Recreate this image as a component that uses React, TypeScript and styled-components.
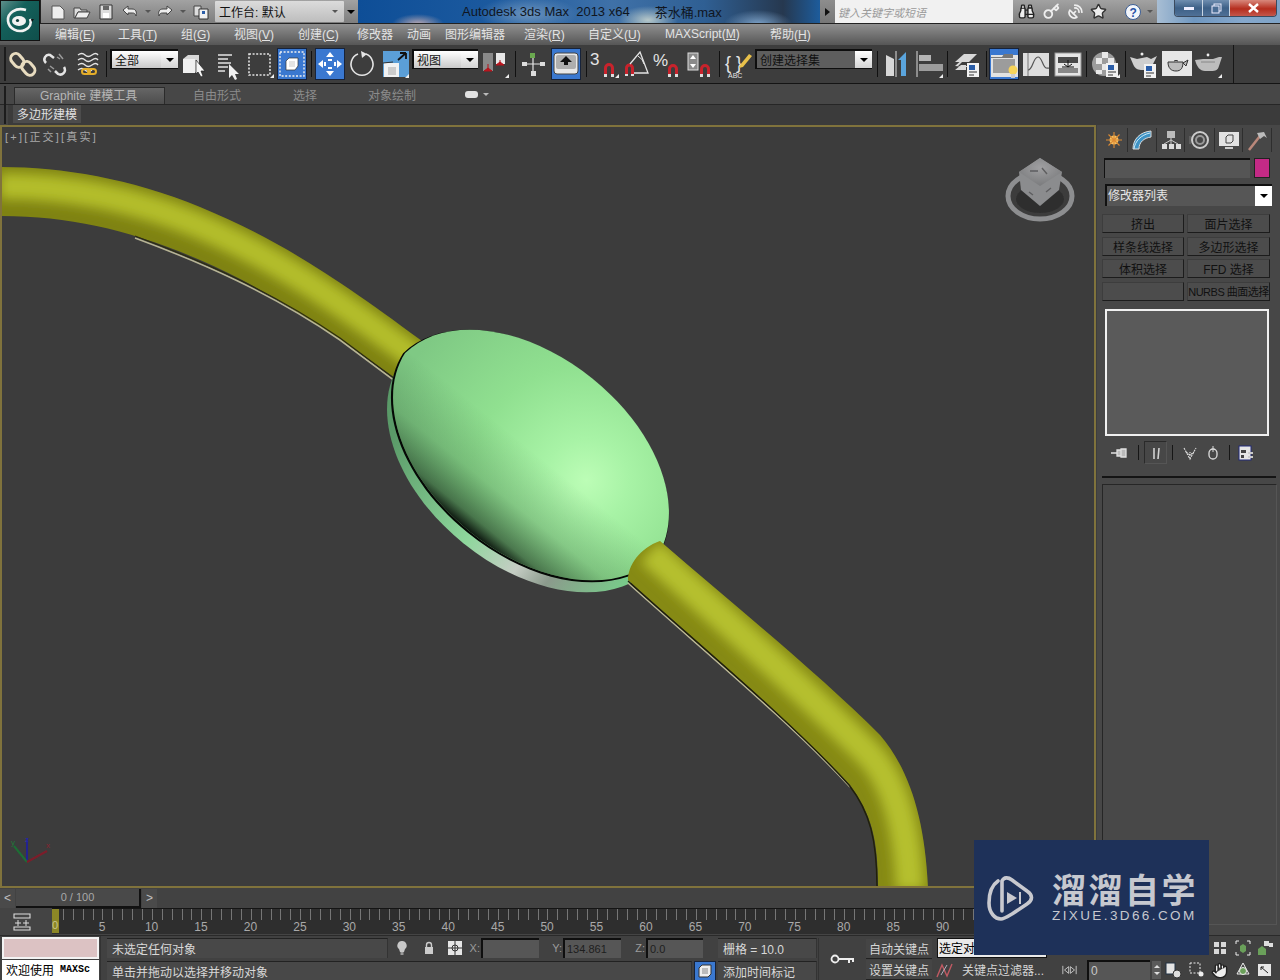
import React from 'react';
import styled, { createGlobalStyle } from 'styled-components';
import { Binoculars, Key, SatelliteDish, Star, Hand } from 'lucide-react';

const FONT = '"Liberation Sans", "Noto Sans CJK SC", sans-serif';

const Global = createGlobalStyle`
  html, body { margin: 0; padding: 0; background: #3f3f3f; overflow: hidden; }
  * { box-sizing: border-box; }
  #root { width: 1280px; height: 980px; }
`;

const Page = styled.div`
  position: relative; width: 1280px; height: 980px; overflow: hidden;
  font-family: ${FONT}; font-size: 12px; background: #444; color: #ddd;
`;

/* ---------- title ---------- */
const TitleBar = styled.div`display: flex; height: 24px; background: #222;`;
const LogoSpace = styled.div`width: 41px; flex: none;`;
const LogoBox = styled.div`
  position: absolute; left: 0; top: 0; width: 40px; height: 41px;
  background: linear-gradient(135deg, #5f8f8b 0%, #14605b 35%, #0f4f4b 100%);
  border: 1px solid #111; display: flex; align-items: center; justify-content: center;
`;
const Qat = styled.div`
  width: 317px; height: 23px; flex: none; display: flex; align-items: center; padding-left: 5px;
  background: linear-gradient(#a2a2a2, #7e7e7e);
`;
const QatCell = styled.div<{ $w: number }>`
  width: ${p => p.$w}px; flex: none; display: flex; align-items: center; justify-content: center; color: #eee;
`;
const Workspace = styled.div`
  width: 129px; height: 21px; flex: none; margin-left: 2px; display: flex; align-items: center; justify-content: space-between;
  padding: 0 6px 0 4px; color: #111; font-size: 12px; background: linear-gradient(#dcdcdc, #bdbdbd); border-radius: 1px;
`;
const TinyCaret = styled.span<{ $c?: string; $up?: boolean }>`
  display: inline-block; width: 0; height: 0; border-left: 3px solid transparent; border-right: 3px solid transparent;
  ${p => p.$up ? `border-bottom: 3px solid ${p.$c || '#555'};` : `border-top: 3px solid ${p.$c || '#555'};`}
`;
const AeroTitle = styled.div`
  width: 462px; height: 23px; flex: none; display: flex; align-items: center; padding-left: 104px;
  color: #10161f; font-size: 13px; white-space: pre;
  background:
    radial-gradient(ellipse 30px 14px at 290px 20px, #b7c8c9, transparent),
    radial-gradient(ellipse 26px 10px at 60px 24px, #b9a7b0, transparent),
    radial-gradient(ellipse 34px 14px at 400px 24px, #7ba0c6, transparent),
    radial-gradient(ellipse 50px 18px at 170px 14px, #6b93bd, transparent),
    linear-gradient(90deg, #0e4e97, #1c5a9f 30%, #3f71a8 55%, #2f5f93 75%, #26384f 92%, #1d5c9c);
`;
const FileName = styled.span`margin-left: 25px;`;
const SearchZone = styled.div`
  width: 337px; height: 23px; flex: none; display: flex; align-items: center;
  background: linear-gradient(#a2a2a2, #7e7e7e);
`;
const SearchArrow = styled.div`
  width: 15px; height: 23px; flex: none; display: flex; align-items: center; justify-content: center;
  background: linear-gradient(#8d8d8d, #777);
`;
const SearchArrowHead = styled.span`
  display: block; width: 0; height: 0; border-top: 4px solid transparent; border-bottom: 4px solid transparent; border-left: 5px solid #111;
`;
const SearchInput = styled.div`
  width: 178px; height: 23px; flex: none; background: #f1f1f1; color: #9a9a9a; font-size: 11px; font-style: italic;
  display: flex; align-items: center; padding-left: 3px;
`;
const Glass = styled.div`
  flex: 1; height: 23px; position: relative;
  background: linear-gradient(90deg, #a8bed4, #6f97c0 30%, #86a8cc 70%, #7ea3c7);
`;
const WinButtons = styled.div`
  position: absolute; left: 17px; top: 0; width: 103px; height: 17px; display: flex; border: 1px solid #3b4a5e; border-top: none;
  border-radius: 0 0 4px 4px; overflow: hidden;
`;
const WinButton = styled.div<{ $w: number; $close?: boolean }>`
  width: ${p => p.$w}px; flex: none; display: flex; align-items: center; justify-content: center;
  background: ${p => p.$close ? 'linear-gradient(#d8887c, #b52d1e 55%, #c4574b)' : 'linear-gradient(#6f8eb0, #3d6087 50%, #4f7096)'};
  border-right: 1px solid #c9d6e4;
`;

/* ---------- menu ---------- */
const MenuBar = styled.div`
  height: 21px; display: flex; align-items: center; padding: 0 0 2px 55px;
  background: linear-gradient(#909090, #565656); color: #e3e3e3; font-size: 12px;
`;
const MenuItem = styled.span<{ $w: number }>`width: ${p => p.$w}px; flex: none; white-space: nowrap;`;

/* ---------- toolbar ---------- */
const MainToolbar = styled.div`
  height: 39px; display: flex; align-items: center; background: #3d3d3d; border-bottom: 1px solid #141414; position: relative;
`;
const Grip = styled.div`
  width: 7px; flex: none; align-self: stretch; margin: 2px 0; position: relative;
  &::before { content: ''; position: absolute; left: 4px; top: 0; bottom: 0; width: 2px; background: #1c1c1c; }
`;
const Tool = styled.div<{ $w: number; $fly?: boolean }>`
  position: relative; width: ${p => p.$w}px; flex: none; height: 32px; display: flex; align-items: center; justify-content: center;
  ${p => p.$fly ? `&::after { content: ''; position: absolute; right: 2px; bottom: 2px; width: 0; height: 0; border-left: 4px solid transparent; border-bottom: 4px solid #eee; }` : ''}
`;
const ActiveInset = styled.div<{ $w: number }>`
  width: ${p => p.$w}px; height: 32px; flex: none; background: #3a78d0; border: 1px solid #17233a; display: flex; align-items: center; justify-content: center;
  &[data-small='1'] { height: 20px; }
`;
const Sep = styled.div<{ $w: number }>`
  width: ${p => p.$w}px; flex: none; height: 26px; display: flex; justify-content: center;
  &::before { content: ''; width: 1px; background: #111; }
`;
const SelectBox = styled.div<{ $w: number; $dark?: boolean }>`
  width: ${p => p.$w}px; margin: -10px 1px 0; height: 20px; flex: none; position: relative;
  display: flex; align-items: center; padding-left: 3px; color: #111; font-size: 12px;
  background: ${p => p.$dark ? '#5e5e5e' : 'linear-gradient(#fff, #c9c9c9)'}; border: 2px solid #0e0e0e; border-right: none; border-bottom: 1px solid #0e0e0e;
`;
const SelectArrow = styled.span`
  position: absolute; right: 0; top: 0; bottom: 0; width: 17px; background: linear-gradient(#fff, #d4d4d4); display: flex; align-items: center; justify-content: center;
`;
const Caret = styled.span`
  display: block; width: 0; height: 0; border-left: 4px solid transparent; border-right: 4px solid transparent; border-top: 4px solid #000;
`;
const ToolbarEnd = styled.div`width: 1px; align-self: stretch; margin-left: 9px; background: #161616;`;
const ToolSvg = styled.svg.attrs({ viewBox: '0 0 32 32', width: 32, height: 32, fill: 'none' })`display: block; flex: none;`;

/* ---------- ribbon ---------- */
const RibbonWrap = styled.div`position: relative; padding-left: 8px;
  &::before { content: ''; position: absolute; left: 4px; top: 2px; bottom: 1px; width: 2px; background: #1c1c1c; z-index: 1; }
`;
const RibbonTabs = styled.div`
  height: 21px; display: flex; align-items: flex-start; padding-top: 3px; background: #474747; border-bottom: 1px solid #262626; margin-left: -8px; padding-left: 14px; color: #8c8c8c;
`;
const RibbonActive = styled.div`
  width: 151px; height: 17px; flex: none; display: flex; align-items: center; padding: 0 0 3px 25px; color: #b5b5b5;
  background: linear-gradient(#666, #4d4d4d); border: 1px solid #2b2b2b; border-bottom: none;
`;
const RibbonTab = styled.div<{ $w: number; $pad: number }>`
  width: ${p => p.$w}px; flex: none; height: 17px; display: flex; align-items: center; padding: 0 0 3px ${p => p.$pad}px;
`;
const RibbonPill = styled.span`
  display: inline-block; width: 13px; height: 7px; border-radius: 3px; background: #e2e2e2; margin: 4px 5px 0 28px;
`;
const RibbonCaret = styled(TinyCaret)`margin-top: 6px;`;
const RibbonRow = styled.div`height: 20px; background: #3b3b3b; padding-left: 5px; display: flex; align-items: flex-start;`;
const RibbonChip = styled.div`
  width: 68px; height: 18px; background: #4c4c4c; color: #e0e0e0; display: flex; align-items: center; justify-content: center; padding-bottom: 1px; font-size: 12px; white-space: nowrap;
`;

/* ---------- middle ---------- */
const Middle = styled.div`display: flex; height: 810px;`;
const LeftColumn = styled.div`width: 1096px; flex: none; display: flex; flex-direction: column;`;
const Viewport = styled.div`
  position: relative; height: 763px; flex: none; border: 2px solid #80733c; background: #3c3c3c; overflow: hidden;
`;
const ViewLabel = styled.div`
  position: absolute; left: 3px; top: 1px; color: #a8a8a8; font-size: 11px; letter-spacing: 2.2px; white-space: pre;
`;
const Scene = styled.svg.attrs({ fill: 'none' })`display: block;`;

const SliderRow = styled.div`height: 20px; display: flex; align-items: center; background: #424242; flex: none;`;
const SliderBtn = styled.div`width: 15px; height: 19px; flex: none; display: flex; align-items: center; justify-content: center; color: #c0c0c0; font-size: 12px; background: #4a4a4a;`;
const SliderThumb = styled.div`
  width: 125px; height: 19px; margin: 0 1px; flex: none; display: flex; align-items: center; justify-content: center; color: #a8a8a8; font-size: 11px;
  background: #494949; border-bottom: 2px solid #111; border-right: 2px solid #111;
`;
const TrackRow = styled.div`height: 27px; display: flex; background: #444; flex: none;`;
const TrackIcon = styled.div`width: 52px; flex: none; display: flex; align-items: center; justify-content: center; padding-right: 8px;`;
const Ruler = styled.div`
  flex: 1; height: 26px; position: relative; background: #2e2e2e; border-top: 1px solid #151515; overflow: hidden;
`;
const Ticks = styled.div`
  height: 11px; background: repeating-linear-gradient(90deg, #888 0 1px, transparent 1px 9.89px); background-position: 1px 0; opacity: .8;
`;
const Labels = styled.div`display: flex; margin-left: -24px; color: #a9a9a9; font-size: 12px; line-height: 14px;`;
const RulerLabel = styled.span`width: 49.45px; flex: none; text-align: center;`;
const TimeHandle = styled.div`
  position: absolute; left: -1px; top: 0; width: 8px; height: 24px; background: #8c8726; color: #c8c48c; font-size: 11px;
  display: flex; align-items: flex-end; justify-content: center; padding-bottom: 2px;
`;

const CommandPanel = styled.div`
  width: 184px; flex: none; background: #474747; border-left: 1px solid #3d3d3d; padding: 3px 0 0 7px; display: flex; flex-direction: column;
`;
const PanelTabs = styled.div`display: flex; height: 24px; margin-left: -4px;`;
const PanelTab = styled.div<{ $w: number }>`
  width: ${p => p.$w}px; flex: none; display: flex; align-items: center; justify-content: center; border-right: 1px solid #2e2e2e;
`;
const NameRow = styled.div`display: flex; margin-top: 6px; height: 20px; gap: 4px;`;
const NameInput = styled.div`width: 146px; background: #555; border-top: 2px solid #111; border-left: 1px solid #111;`;
const Swatch = styled.div`width: 16px; background: #c42a86; border: 1px solid #222;`;
const ModifierList = styled.div`
  position: relative; width: 167px; height: 22px; margin: 6px 0 0 1px; background: #565656; border-top: 2px solid #111; border-left: 2px solid #111;
  color: #e6e6e6; display: flex; align-items: center; padding: 0 0 3px 1px; font-size: 12px;
`;
const ModArrow = styled.span`
  position: absolute; right: 0; top: 0; bottom: 0; width: 17px; background: #fff; display: flex; align-items: center; justify-content: center;
`;
const ModGrid = styled.div`
  display: grid; grid-template-columns: 82px 83px; column-gap: 3px; grid-auto-rows: 19px; row-gap: 3.6px; margin: 8px 0 0 -2px; width: 168px;
`;
const ModButton = styled.div<{ $narrow?: boolean }>`
  background: #4c4c4c; border: 1px solid #3d3d3d; border-right-color: #1c1c1c; border-bottom-color: #1c1c1c; color: #111;
  display: flex; align-items: center; justify-content: center; font-size: 12px; white-space: nowrap; overflow: hidden;
  ${p => p.$narrow ? 'letter-spacing: -.5px; font-size: 11px;' : ''}
`;
const Preview = styled.div`
  width: 164px; height: 127px; margin: 8px 0 0 1px; background: #5a5a5a; border: 2px solid #f0f0f0; flex: none;
`;
const StackIcons = styled.div`display: flex; align-items: center; height: 24px; margin-top: 5px;`;
const StackCell = styled.div<{ $w: number; $box?: boolean }>`
  width: ${p => p.$w}px; height: 23px; flex: none; display: flex; align-items: center; justify-content: center;
  ${p => p.$box ? 'border: 1px solid #2a2a2a; border-right-color:#555;border-bottom-color:#555;' : ''}
`;
const StackSep = styled.div`width: 1px; height: 15px; background: #161616; flex: none; margin: 0 5px;`;
const RollupLine = styled.div`height: 2px; background: #141414; width: 174px; margin: 11px 0 0 -2px; flex: none;`;
const RollupBox = styled.div`
  width: 175px; height: 441px; margin: 6px 0 0 -2px; flex: none; background: #484848; border: 1px solid #262626; border-right-color:#555; border-bottom-color:#555;
`;

/* ---------- status ---------- */
const StatusBar = styled.div`display: flex; height: 45px; background: #414141; border-top: 1px solid #2a2a2a;`;
const Listener = styled.div`width: 100px; flex: none; padding: 1px 0 0 2px; display: flex; flex-direction: column; gap: 1px;`;
const ListenerPink = styled.div`width: 97px; height: 22px; background: #dcc2c3; border: 2px solid #f3f3f3; flex: none;`;
const ListenerWhite = styled.div`
  width: 97px; height: 20px; background: #fff; color: #000; font-size: 12px; display: flex; align-items: center; padding: 0 0 1px 4px; white-space: nowrap; overflow: hidden; flex: none;
`;
const ListenerMono = styled.span`font-family: "Liberation Mono", monospace; font-size: 10px; font-weight: bold; margin-left: 6px;`;
const StatusMid = styled.div`
  width: 718px; flex: none; padding: 2px 0 0 6px; border-left: 1px solid #333; display: flex; flex-direction: column; gap: 3px;
`;
const StatusRow = styled.div`display: flex; align-items: center; height: 20px; flex: none;`;
const StatusText = styled.div<{ $w: number }>`
  width: ${p => p.$w}px; height: 20px; flex: none; background: #484848; border-top: 1px solid #222; border-right: 1px solid #333;
  color: #d8d8d8; display: flex; align-items: center; padding-left: 5px; font-size: 12px; white-space: nowrap;
`;
const StatusCell = styled.div<{ $w: number }>`width: ${p => p.$w}px; flex: none; display: flex; align-items: center; justify-content: center;`;
const AxisLabel = styled.span<{ $w: number }>`width: ${p => p.$w}px; flex: none; text-align: right; color: #9c9c9c; font-size: 11px; padding-right: 1px;`;
const CoordInput = styled.div<{ $w: number }>`
  width: ${p => p.$w}px; height: 20px; flex: none; background: #565656; border-top: 2px solid #0f0f0f; border-left: 2px solid #0f0f0f; color: #1e1e1e; font-size: 11px;
  display: flex; align-items: center; padding-left: 2px;
`;
const KeyIconCell = styled.div`width: 48px; flex: none; display: flex; align-items: center; justify-content: center; border-left: 1px solid #333; margin-top: 2px;`;
const KeyColumn = styled.div`width: 67px; flex: none; padding-top: 3px; display: flex; flex-direction: column; gap: 1px;`;
const KeyButton = styled.div`
  width: 66px; height: 21px; display: flex; align-items: center; justify-content: center; color: #d5d5d5; font-size: 12px; background: #454545; border-bottom: 1px solid #222; white-space: nowrap;
`;
const KeyOptions = styled.div`width: 115px; flex: none; padding: 2px 0 0 4px; display: flex; flex-direction: column; gap: 2px;`;
const SelectSet = styled.div`
  width: 110px; height: 20px; background: #e9e9e9; color: #000; border: 1px solid #111; font-size: 12px; padding-left: 1px; display: flex; align-items: center; white-space: nowrap; overflow: hidden;
`;
const FilterRow = styled.div`
  display: flex; align-items: center; height: 21px; color: #d5d5d5; font-size: 12px; white-space: nowrap; gap: 7px; margin-left: -2px;
`;
const PlayBlock = styled.div`width: 15px; flex: none; margin-left: 14px; margin-top: 26px; height: 16px; display: flex; align-items: center; justify-content: center;`;
const FrameInput = styled.div`
  width: 63px; height: 20px; flex: none; margin: 24px 0 0 10px; background: #565656; border-top: 2px solid #0f0f0f; border-left: 2px solid #0f0f0f; color: #c8c8c8; font-size: 12px; display: flex; align-items: center; padding-left: 2px;
`;
const FrameSpin = styled.div`width: 9px; height: 18px; flex: none; margin: 25px 0 0 2px; background: #5a5a5a; display: flex; flex-direction: column; align-items: center; justify-content: space-evenly;`;
const NavGrid = styled.div`
  width: 113px; flex: none; margin-left: 2px; padding-top: 1px; display: grid; grid-template-columns: 21px 24px 23px 23px 22px; grid-auto-rows: 22px;
`;
const NavCell = styled.div`display: flex; align-items: center; justify-content: center; color: #e6e6e6;`;

/* ---------- watermark ---------- */
const Watermark = styled.div`
  position: absolute; left: 974px; top: 840px; width: 235px; height: 115px; background: #1e3159; display: flex; align-items: center; padding-left: 13px; gap: 17px;
`;
const MarkText = styled.div`display: flex; flex-direction: column; color: #c6c8cf;`;
const MarkTitle = styled.div`font-family: "Noto Sans CJK SC", sans-serif; font-weight: 700; font-size: 34px; line-height: 36px; letter-spacing: 2.5px; white-space: nowrap;`;
const MarkUrl = styled.div`font-family: "Liberation Sans", sans-serif; font-size: 13.5px; line-height: 18px; letter-spacing: 2.4px; white-space: nowrap;`;

/* ---------- icons ---------- */
const W = '#e4e4e4';
const icons: Record<string, React.ReactNode> = {
  link: <g stroke="#e8dcc0" strokeWidth="3"><rect x="5" y="5" width="10" height="15" rx="5" transform="rotate(-40 10 12)" /><rect x="16" y="13" width="10" height="15" rx="5" transform="rotate(-40 21 20)" /></g>,
  unlink: <g stroke={W} strokeWidth="2.5"><path d="M7 15c-4-4 0-9 4-8l4 3" /><path d="M25 19c3 5-2 9-6 7l-3-3" /><path d="M18 9l3 2m-1-5l4 5M9 21l3 3m-1-6l4 3" stroke="#9a9a9a" strokeWidth="1.5" /></g>,
  bind: <g><path d="M6 7q4-3 7 0t7 0t6 0M6 12q4-3 7 0t7 0t6 0M6 17q4-3 7 0t7 0t6 0M6 22q4-3 7 0t7 0" stroke={W} strokeWidth="1.4" /><rect x="10" y="21" width="8" height="5" rx="2.5" stroke="#e5ae2a" strokeWidth="2" /><rect x="16" y="21" width="8" height="5" rx="2.5" stroke="#e5ae2a" strokeWidth="2" /></g>,
  select: <g><path d="M4 11l5-4h11v13l-4 5H4z" fill="#d8d8d8" /><path d="M4 11h12v14H4z" fill="#f0f0f0" /><path d="M17 12l9 11h-4l2 5-2 1-3-5-2 2z" fill="#f5f5f5" stroke="#222" strokeWidth=".7" /></g>,
  selname: <g><path d="M6 7h14M6 11h10M6 15h13M6 19h10M6 23h7" stroke={W} strokeWidth="1.3" /><path d="M17 16l10 10h-4l2 5-2 1-3-5-3 3z" fill="#f0f0f0" /></g>,
  rect: <rect x="5" y="6" width="21" height="21" stroke={W} strokeWidth="1.6" strokeDasharray="2 1.6" />,
  window: <g><rect x="4" y="4" width="24" height="24" stroke="#f0f0f0" strokeWidth="1.4" strokeDasharray="2 1.6" /><path d="M10 13l3-3h9v8l-3 4h-9z" fill="#fff" stroke="#333" strokeWidth=".7" /><path d="M13 13h6v6h-6z" fill="#e4e4e4" /></g>,
  move: <g fill="#fff"><path d="M16 4l4 5h-8zM16 28l4-5h-8zM4 16l5-4v8zM28 16l-5-4v8z" /><rect x="14" y="11" width="4" height="2" /><rect x="14" y="19" width="4" height="2" /><rect x="10" y="14" width="2" height="4" /><rect x="20" y="14" width="2" height="4" /></g>,
  rotate: <g><path d="M20 6a11 11 0 1 1-8 0" stroke={W} strokeWidth="1.6" /><path d="M15 3l6 3-5 4z" fill={W} /></g>,
  scale: <g><path d="M4 3h26v26H4z" fill="#5b9fd8" /><path d="M5 15h15v14H5z" fill="#f2f2f2" /><path d="M9 19h8v8H9z" fill="#ccc" /><path d="M4 15l10-1" stroke="#333" /><path d="M19 12l8-7m0 0h-6m6 0v6" stroke="#111" strokeWidth="1.8" /></g>,
  refs: <g><path d="M4 5h10v18H4z" fill="#8a8a8a" /><path d="M17 5h9v11h-9z" fill="#e8e8e8" /><path d="M9 16v7m-4 0l4-3 4 3zM21 12v5m-4 0l4-3 4 3z" stroke="#b3131b" fill="#c41a22" /></g>,
  pivot: <g><path d="M16 5v22M5 16h22" stroke={W} strokeWidth="1.2" /><rect x="13" y="5" width="5" height="5" fill="#6aa84f" /><rect x="5" y="14" width="5" height="4" fill="#ddd" /><rect x="23" y="14" width="5" height="4" fill="#ddd" /><rect x="14" y="23" width="5" height="5" fill="#ddd" /></g>,
  manip: <g><rect x="4" y="5" width="24" height="21" rx="3" fill="#e8e8e8" stroke="#444" /><rect x="6" y="7" width="20" height="14" rx="2" fill="#aeaeae" /><path d="M16 8l6 6h-4v3h-4v-3h-4z" fill="#111" /></g>,
  snap3: <g><text x="2" y="17" fontSize="17" fill={W} fontFamily="Liberation Sans">3</text><path d="M16 29v-9a5 5 0 0 1 10 0v9h-3v-9a2 2 0 0 0-4 0v9z" fill="#c8232c" /><path d="M16 26h3v3h-3zM23 26h3v3h-3z" fill="#ddd" /></g>,
  snapA: <g><path d="M4 28v-8a4 4 0 0 1 9 0v8h-3v-8a1 1 0 0 0-3 0v8z" fill="#c8232c" /><path d="M4 26h3v2H4zM10 26h3v2h-3z" fill="#ddd" /><path d="M9 16L19 4l8 21h-14" stroke={W} strokeWidth="1.3" /><path d="M17 8q5 3 6 8" stroke={W} /></g>,
  snapP: <g><text x="1" y="18" fontSize="17" fill={W} fontFamily="Liberation Sans">%</text><path d="M16 29v-8a5 5 0 0 1 10 0v8h-3v-8a2 2 0 0 0-4 0v8z" fill="#c8232c" /><path d="M16 26h3v3h-3zM23 26h3v3h-3z" fill="#ddd" /></g>,
  snapS: <g><rect x="4" y="5" width="10" height="17" fill="#8a8a8a" stroke="#ddd" /><path d="M9 7l3 4H6zM9 20l3-4H6z" fill="#fff" /><path d="M16 29v-8a5 5 0 0 1 10 0v8h-3v-8a2 2 0 0 0-4 0v8z" fill="#c8232c" /><path d="M16 26h3v3h-3zM23 26h3v3h-3z" fill="#ddd" /></g>,
  abc: <g><text x="3" y="21" fontSize="18" fill={W} fontFamily="Liberation Sans">{'{ }'}</text><text x="6" y="30" fontSize="7" fill={W} fontFamily="Liberation Sans">ABC</text><path d="M18 17L27 6l3 2-9 11-4 1z" fill="#e8c04a" /></g>,
  mirror: <g><path d="M15 3v26" stroke="#ddd" /><path d="M5 7l8 4v17H5z" fill="#d8d8d8" /><path d="M25 4l-8 8h3v16h5z" fill="#5aa4dc" /></g>,
  align: <g><path d="M4 3v26" stroke="#ddd" /><path d="M6 7h12v6H6z" fill="#b5b5b5" /><path d="M6 16h24v7H6z" fill="#9c9c9c" /></g>,
  layer: <g fill="#d8d8d8"><path d="M4 14l9-8h13l-8 8zM4 18l9-8 1 1-7 7h9v1zM4 22l6-5h5v5z" /><rect x="16" y="15" width="12" height="14" fill="#f2f2f2" /><rect x="18" y="17" width="6" height="5" fill="#2a5da8" /><path d="M18 24h8M18 27h5" stroke="#333" /></g>,
  manager: <g><path d="M3 7h27v22H3z" fill="#e2e2e2" /><path d="M5 11h22v14H5z" fill="#9c9c9c" /><path d="M3 9h11l2-3h9v4H3z" fill="#777" /><circle cx="25" cy="22" r="4.5" fill="#f7d45a" /><rect x="23" y="26" width="4" height="4" fill="#ccc" /></g>,
  curve: <g><rect x="3" y="5" width="26" height="23" fill="#dedede" /><path d="M8 5v23" stroke="#777" /><path d="M8 22c5 0 5-13 10-13s4 13 11 11" stroke="#555" strokeWidth="1.2" /></g>,
  schematic: <g><rect x="3" y="5" width="26" height="23" fill="#e6e6e6" stroke="#999" /><rect x="6" y="9" width="20" height="6" fill="#4a4a4a" /><rect x="6" y="20" width="20" height="5" fill="#888" /><path d="M16 12v7m-4-3l4 3 4-3M10 19h12" stroke="#111" /></g>,
  material: <g><circle cx="14" cy="16" r="12" fill="#9c9c9c" /><path d="M6 10h6v6H6zM12 4h6v6h-6zM18 10h6v6h-6zM12 16h6v6h-6zM6 22h6v4H6zM18 22h4v4h-4z" fill="#e8e8e8" /><rect x="16" y="15" width="12" height="14" fill="#f2f2f2" /><rect x="18" y="17" width="6" height="5" fill="#2a5da8" /><path d="M18 24h8M18 27h5" stroke="#333" /></g>,
  renderset: <g><path d="M2 9l7 2 10-2 4 2 6-3-4 8c-2 5-3 6-8 6h-4c-4 0-7-3-8-6z" fill="#cfcfcf" /><circle cx="14" cy="6" r="1.5" fill="#eee" /><rect x="16" y="16" width="12" height="14" fill="#f2f2f2" /><rect x="18" y="18" width="6" height="5" fill="#2a5da8" /><path d="M18 25h8M18 28h5" stroke="#333" /></g>,
  renderwin: <g><rect x="1" y="3" width="30" height="25" fill="#e6e6e6" /><path d="M7 14h15c0 6-2 9-7 9s-8-3-8-9zM22 15l5-3-2 6zM13 13a3 2 0 0 1 4 0" fill="#bbb" stroke="#333" /></g>,
  quick: <g><path d="M2 12l8-1h10l6-2 3 0-3 9c-1 4-3 5-8 5h-6c-5 0-8-4-10-11z" fill="#bdbdbd" /><circle cx="15" cy="7" r="1.4" fill="#eee" /><path d="M8 14h14" stroke="#888" /></g>,
};

type Item = { k: 'i' | 's' | 'sel'; w: number; n?: string; on?: boolean; fly?: boolean; t?: string; dark?: boolean; iw?: number };
const tools: Item[] = [
  { k: 'i', w: 32, n: 'link' }, { k: 'i', w: 32, n: 'unlink' }, { k: 'i', w: 33, n: 'bind' }, { k: 's', w: 5 },
  { k: 'sel', w: 68, t: '全部' },
  { k: 'i', w: 32, n: 'select' }, { k: 'i', w: 33, n: 'selname' }, { k: 'i', w: 32, n: 'rect', fly: true },
  { k: 'i', w: 32, n: 'window', on: true, iw: 30, fly: false }, { k: 's', w: 6 },
  { k: 'i', w: 32, n: 'move', on: true, iw: 30 }, { k: 'i', w: 32, n: 'rotate' }, { k: 'i', w: 33, n: 'scale', fly: true },
  { k: 'sel', w: 66, t: '视图' },
  { k: 'i', w: 32, n: 'refs', fly: true }, { k: 's', w: 8 }, { k: 'i', w: 28, n: 'pivot' },
  { k: 'i', w: 38, n: 'manip', on: true, iw: 30 }, { k: 's', w: 2 },
  { k: 'i', w: 34, n: 'snap3', fly: true }, { k: 'i', w: 32, n: 'snapA' }, { k: 'i', w: 30, n: 'snapP' }, { k: 'i', w: 33, n: 'snapS' }, { k: 's', w: 6 },
  { k: 'i', w: 32, n: 'abc' },
  { k: 'sel', w: 117, t: '创建选择集', dark: true }, { k: 's', w: 9 },
  { k: 'i', w: 30, n: 'mirror' }, { k: 'i', w: 33, n: 'align', fly: true }, { k: 's', w: 5 }, { k: 'i', w: 34, n: 'layer' }, { k: 's', w: 4 },
  { k: 'i', w: 31, n: 'manager', on: true, iw: 30 }, { k: 'i', w: 33, n: 'curve' }, { k: 'i', w: 31, n: 'schematic' }, { k: 's', w: 7 },
  { k: 'i', w: 32, n: 'material', fly: true }, { k: 's', w: 6 }, { k: 'i', w: 32, n: 'renderset' }, { k: 'i', w: 33, n: 'renderwin' }, { k: 'i', w: 31, n: 'quick', fly: true },
];

const menu: [string, string | null, number][] = [
  ['编辑', 'E', 63], ['工具', 'T', 63], ['组', 'G', 53], ['视图', 'V', 64], ['创建', 'C', 59], ['修改器', null, 50], ['动画', null, 38],
  ['图形编辑器', null, 79], ['渲染', 'R', 64], ['自定义', 'U', 77], ['MAXScript', 'M', 105], ['帮助', 'H', 60],
];

const rulerLabels = Array.from({ length: 20 }, (_, i) => i * 5);

const Small = ({ children, w = 18, h = 18, vb = '0 0 18 18' }: { children: React.ReactNode; w?: number; h?: number; vb?: string }) => (
  <svg width={w} height={h} viewBox={vb} fill="none" style={{ display: 'block' }}>{children}</svg>
);

const EGG = 'M-162,0 C-156,-54 -88,-98 0,-98 C88,-98 156,-54 162,0 C156,54 88,98 0,98 C-88,98 -156,54 -162,0 Z';

export default function App() {
  return (
    <Page>
      <Global />
      <TitleBar>
        <LogoSpace />
        <Qat>
          <QatCell $w={24}><Small><path d="M3 3h8l4 4v9H3z" fill="#eee" stroke="#555" /></Small></QatCell>
          <QatCell $w={24}><Small><path d="M1 5h6l1 2h6v2H5l-3 6H1z" fill="#ddd" stroke="#444" /><path d="M5 9h12l-3 6H2z" fill="#eee" stroke="#444" /></Small></QatCell>
          <QatCell $w={24}><Small><path d="M3 2h12v14H3z" fill="#ddd" stroke="#333" /><path d="M6 3h6v4H6z" fill="#666" /><path d="M6 10h6v5H6z" fill="#fff" /></Small></QatCell>
          <QatCell $w={24}><Small><path d="M2 7l5-4v3h4c4 0 5 3 4 7-1-3-2-3-4-3H7v2z" fill="#eee" stroke="#444" /></Small></QatCell>
          <QatCell $w={11}><TinyCaret /></QatCell>
          <QatCell $w={24}><Small><path d="M16 7l-5-4v3H7c-4 0-5 3-4 7 1-3 2-3 4-3h4v2z" fill="#eee" stroke="#444" /></Small></QatCell>
          <QatCell $w={12}><TinyCaret /></QatCell>
          <QatCell $w={24}><Small><path d="M2 3h7v10H2z" fill="#ddd" stroke="#444" /><path d="M7 6h9v10H7z" fill="#f0f0f0" stroke="#333" /><path d="M10 8h3v3h-3z" fill="#2a5da8" /></Small></QatCell>
          <Workspace>工作台: 默认<TinyCaret /></Workspace>
          <QatCell $w={14}><Caret /></QatCell>
        </Qat>
        <AeroTitle>Autodesk 3ds Max  2013 x64<FileName>茶水桶.max</FileName></AeroTitle>
        <SearchZone>
          <SearchArrow><SearchArrowHead /></SearchArrow>
          <SearchInput>键入关键字或短语</SearchInput>
          <QatCell $w={26}><Binoculars size={17} fill="#eee" color="#222" /></QatCell>
          <QatCell $w={24}><Key size={17} color="#eee" strokeWidth={2.6} /></QatCell>
          <QatCell $w={24}><SatelliteDish size={17} color="#eee" strokeWidth={2.4} /></QatCell>
          <QatCell $w={23}><Star size={17} color="#333" fill="#eee" /></QatCell>
          <QatCell $w={9} />
          <QatCell $w={28}><Small><circle cx="9" cy="9" r="7.5" fill="#f2f5fa" stroke="#3c5f96" /><text x="5.5" y="13.5" fontSize="12" fontWeight="700" fill="#2753a6" fontFamily="Liberation Sans">?</text></Small></QatCell>
          <QatCell $w={6}><TinyCaret /></QatCell>
        </SearchZone>
        <Glass>
          <WinButtons>
            <WinButton $w={28}><Small w={12} h={6} vb="0 0 12 6"><rect x="1" y="2" width="10" height="3" fill="#eef" /></Small></WinButton>
            <WinButton $w={27}><Small w={11} h={11} vb="0 0 11 11"><rect x="3" y="1" width="7" height="7" stroke="#eef" /><rect x="1" y="3" width="7" height="7" fill="#4a6d94" stroke="#eef" /></Small></WinButton>
            <WinButton $close $w={48}><Small w={11} h={10} vb="0 0 11 10"><path d="M1 1l9 8M10 1L1 9" stroke="#fff" strokeWidth="2.4" /></Small></WinButton>
          </WinButtons>
        </Glass>
      </TitleBar>
      <LogoBox>
        <Small w={32} h={30} vb="0 0 32 30">
          <path d="M22 4C12 1 3 7 4 15c1 8 10 12 17 9 5-2 7-7 5-11" stroke="#f2f2f2" strokeWidth="2.6" />
          <ellipse cx="15" cy="15" rx="7" ry="5" fill="#f2f2f2" />
          <circle cx="13.5" cy="14.5" r="1.6" fill="#123f3c" />
          <path d="M27 13l3 0-2 3z" fill="#111" />
        </Small>
      </LogoBox>

      <MenuBar>
        {menu.map(([t, u, w]) => (
          <MenuItem key={t} $w={w}>{t}{u && <>(<u>{u}</u>)</>}</MenuItem>
        ))}
      </MenuBar>

      <MainToolbar>
        <Grip />
        {tools.map((it, i) => {
          if (it.k === 's') return <Sep key={i} $w={it.w} />;
          if (it.k === 'sel') return (
            <SelectBox key={i} $w={it.w} $dark={it.dark}>{it.t}<SelectArrow><Caret /></SelectArrow></SelectBox>
          );
          const svg = <ToolSvg>{icons[it.n!]}</ToolSvg>;
          return (
            <Tool key={i} $w={it.w} $fly={it.fly}>
              {it.on ? <ActiveInset $w={it.iw!}>{svg}</ActiveInset> : svg}
            </Tool>
          );
        })}
        <ToolbarEnd />
      </MainToolbar>

      <RibbonWrap>
        <RibbonTabs>
          <RibbonActive>Graphite 建模工具</RibbonActive>
          <RibbonTab $w={100} $pad={28}>自由形式</RibbonTab>
          <RibbonTab $w={75} $pad={28}>选择</RibbonTab>
          <RibbonTab $w={97} $pad={28}>对象绘制</RibbonTab>
          <RibbonPill /><RibbonCaret $c="#bbb" />
        </RibbonTabs>
        <RibbonRow><RibbonChip>多边形建模</RibbonChip></RibbonRow>
      </RibbonWrap>

      <Middle>
        <LeftColumn>
          <Viewport>
            <ViewLabel>[+][正交][真实]</ViewLabel>
            <Scene width={1092} height={759} viewBox="2 127 1092 759">
              <defs>
                <filter id="blur6" x="-20%" y="-20%" width="140%" height="140%"><feGaussianBlur stdDeviation="6" /></filter>
                <filter id="blur2"><feGaussianBlur stdDeviation="1.2" /></filter>
                <filter id="soft"><feGaussianBlur stdDeviation=".6" /></filter>
                <clipPath id="upperClip"><path d="M0,167 C60,167 130,178 200,207 C280,240 340,280 430,347 L395,378 C340,338 270,290 200,260 C130,230 70,216 0,216 Z" /></clipPath>
                <clipPath id="lowerClip"><path d="M660,541 C740,610 820,675 880,735 C910,770 925,820 928,888 L878,888 C878,840 872,815 850,785 C790,720 700,645 628,580 C628,565 640,548 660,541 Z" /></clipPath>
                <radialGradient id="eggBase" gradientUnits="userSpaceOnUse" cx="59" cy="-15" r="210">
                  <stop offset="0" stopColor="#bcfdb6" />
                  <stop offset=".2" stopColor="#a8f3a6" />
                  <stop offset=".55" stopColor="#90e090" />
                  <stop offset="1" stopColor="#7fc984" />
                </radialGradient>
                <linearGradient id="eggShade" x1="0" y1="0" x2="0" y2="1">
                  <stop offset=".48" stopColor="#1a3a22" stopOpacity="0" />
                  <stop offset=".75" stopColor="#1a3a22" stopOpacity=".2" />
                  <stop offset=".93" stopColor="#0f2014" stopOpacity=".55" />
                  <stop offset="1" stopColor="#060c08" stopOpacity=".95" />
                </linearGradient>
                <linearGradient id="eggBack" gradientUnits="userSpaceOnUse" x1="-122" y1="52" x2="149" y2="50">
                  <stop offset="0" stopColor="#5a9a68" />
                  <stop offset=".45" stopColor="#8ed79c" />
                  <stop offset=".66" stopColor="#c5cdc4" />
                  <stop offset=".78" stopColor="#8b9a8c" />
                  <stop offset="1" stopColor="#79c98a" />
                </linearGradient>
                <radialGradient id="cubeTop" cx=".5" cy=".35" r=".7">
                  <stop offset="0" stopColor="#a0a0a2" /><stop offset="1" stopColor="#77787a" />
                </radialGradient>
              </defs>

              <g clipPath="url(#upperClip)">
                <rect x="0" y="160" width="440" height="225" fill="#7f8312" />
                <path d="M0,186 C60,186 130,197 200,226 C280,260 340,302 416,358" stroke="#b3bd2b" strokeWidth="26" filter="url(#blur6)" />
              </g>
              <path d="M135,238 C200,262 270,292 340,340 L395,381" stroke="#b7b495" strokeWidth="1.6" />
              <path d="M135,236 C200,260 270,290 340,338 L395,379" stroke="#2c2c10" strokeWidth="1.2" />

              <path d={EGG} transform="translate(525 467) rotate(39)" fill="url(#eggBack)" />
              <path d={EGG} transform="translate(530 456) rotate(39) scale(1.008)" fill="#050805" />
              <path d={EGG} transform="translate(531 455) rotate(39)" fill="url(#eggBase)" />
              <path d={EGG} transform="translate(531 455) rotate(39)" fill="url(#eggShade)" />

              <g clipPath="url(#lowerClip)">
                <rect x="620" y="535" width="320" height="360" fill="#868a14" />
                <path d="M650,552 C725,620 805,690 870,755 C897,785 908,835 910,890" stroke="#b5c02d" strokeWidth="28" filter="url(#blur6)" />
              </g>
              <path d="M628,583 C700,648 790,722 850,787" stroke="#bdb997" strokeWidth="1.5" />
              <path d="M628,581 C700,646 790,720 849,785 C870,812 877,840 877,888" stroke="#20200a" strokeWidth="1.4" />

              <g filter="url(#soft)">
                <ellipse cx="1040" cy="196" rx="32" ry="23" stroke="#8d8e90" strokeWidth="5" />
                <ellipse cx="1040" cy="199" rx="24" ry="14" fill="#2f2f2f" />
                <path d="M1040,158 L1062,172 L1059,190 L1040,206 L1021,190 L1019,172 Z" fill="#8b8c8e" />
                <path d="M1040,158 L1062,172 L1040,186 L1019,172 Z" fill="url(#cubeTop)" />
                <path d="M1030,171h8M1042,168l5,6M1029,192l4,3M1046,192l5-4" stroke="#5e5e60" strokeWidth="1.4" />
              </g>

              <g filter="url(#soft)">
                <path d="M27,862 L27,838" stroke="#23238f" strokeWidth="2" />
                <path d="M27,862 L14,846" stroke="#1d6e34" strokeWidth="2" />
                <path d="M27,862 L47,851" stroke="#7c1f2a" strokeWidth="2" />
              </g>
              <text x="25" y="842" fontSize="8" fill="#2c2ca0" fontFamily="Liberation Sans">z</text>
              <text x="11" y="845" fontSize="8" fill="#1f7a3a" fontFamily="Liberation Sans">y</text>
              <text x="46" y="848" fontSize="8" fill="#8a2430" fontFamily="Liberation Sans">x</text>
            </Scene>
          </Viewport>

          <SliderRow>
            <SliderBtn>&lt;</SliderBtn>
            <SliderThumb>0 / 100</SliderThumb>
            <SliderBtn>&gt;</SliderBtn>
          </SliderRow>

          <TrackRow>
            <TrackIcon>
              <Small w={20} h={20} vb="0 0 20 20">
                <path d="M2 2h16v4H2zM2 15h16v3H2z" stroke="#ddd" strokeWidth="1.1" />
                <path d="M6 8v6M3 11h6M14 8v6M11 11h6" stroke="#ddd" strokeWidth="1" />
              </Small>
            </TrackIcon>
            <Ruler>
              <Ticks />
              <Labels>
                {rulerLabels.map(n => <RulerLabel key={n}>{n === 0 ? '' : n}</RulerLabel>)}
              </Labels>
              <TimeHandle>0</TimeHandle>
            </Ruler>
          </TrackRow>
        </LeftColumn>
        <CommandPanel>
          <PanelTabs>
            <PanelTab $w={28}><Small><circle cx="9" cy="9" r="4.5" fill="#f5c262" /><path d="M9 1v16M1 9h16M3.5 3.5l11 11M14.5 3.5l-11 11" stroke="#dd8a33" strokeWidth="1.1" /></Small></PanelTab>
            <PanelTab $w={29}><Small w={22} h={22} vb="0 0 22 22"><path d="M2 20C2 10 9 3 20 2v6C13 9 8 13 8 20z" fill="#3f93c5" stroke="#ddd" /><path d="M3 20C4 12 10 6 19 4" stroke="#cde9f7" /></Small></PanelTab>
            <PanelTab $w={28}><Small w={22} h={22} vb="0 0 22 22"><rect x="7" y="2" width="8" height="7" fill="#bbb" /><rect x="2" y="15" width="5" height="5" fill="#ddd" /><rect x="9" y="15" width="5" height="5" fill="#ddd" /><rect x="16" y="15" width="5" height="5" fill="#ddd" /><path d="M11 9v6M11 11L4 15M11 11l7 4" stroke="#ccc" /></Small></PanelTab>
            <PanelTab $w={30}><Small w={22} h={22} vb="0 0 22 22"><circle cx="11" cy="11" r="8" stroke="#ccc" strokeWidth="2" /><circle cx="11" cy="11" r="4" stroke="#999" strokeWidth="2" /><path d="M1 7v8" stroke="#777" /></Small></PanelTab>
            <PanelTab $w={28}><Small w={22} h={22} vb="0 0 22 22"><rect x="1" y="3" width="20" height="14" fill="#e2e2e2" /><path d="M8 8l2-2h5v6l-2 2H8z" stroke="#444" /><path d="M7 19h8" stroke="#ccc" strokeWidth="2" /></Small></PanelTab>
            <PanelTab $w={29}><Small w={22} h={22} vb="0 0 22 22"><path d="M3 21L14 7" stroke="#b9877a" strokeWidth="2.6" /><path d="M11 4l7-1 3 6-3-2-4 3z" fill="#bcbcbc" /></Small></PanelTab>
          </PanelTabs>
          <NameRow><NameInput /><Swatch /></NameRow>
          <ModifierList>修改器列表<ModArrow><Caret /></ModArrow></ModifierList>
          <ModGrid>
            <ModButton>挤出</ModButton><ModButton>面片选择</ModButton>
            <ModButton>样条线选择</ModButton><ModButton>多边形选择</ModButton>
            <ModButton>体积选择</ModButton><ModButton>FFD 选择</ModButton>
            <ModButton /><ModButton $narrow>NURBS 曲面选择</ModButton>
          </ModGrid>
          <Preview />
          <StackIcons>
            <StackCell $w={29}><Small><path d="M1 9h6M7 6h4v6H7zM11 5h5v8h-5z" stroke="#e2e2e2" strokeWidth="1.3" fill="#bbb" /></Small></StackCell>
            <StackSep />
            <StackCell $w={23} $box><Small><path d="M7 4v11M12 4l-1 11" stroke="#d0d0d0" strokeWidth="1.6" /></Small></StackCell>
            <StackSep />
            <StackCell $w={24}><Small><path d="M3 4l6 11 6-11M9 15V8M5 8l4 3 4-3" stroke="#ddd" strokeWidth="1.1" strokeDasharray="2 1" /></Small></StackCell>
            <StackCell $w={22}><Small><rect x="5" y="5" width="8" height="10" rx="4" stroke="#ddd" strokeWidth="1.3" /><path d="M9 2v6" stroke="#ddd" /></Small></StackCell>
            <StackSep />
            <StackCell $w={22}><Small><rect x="2" y="2" width="12" height="14" fill="#e6e6e6" stroke="#222a7a" /><path d="M4 6h5v3H4zM4 11h3v3H4z" fill="#444" /><path d="M11 8h5v2h-5zM11 12h5v2h-5z" fill="#ccc" /></Small></StackCell>
          </StackIcons>
          <RollupLine />
          <RollupBox />
        </CommandPanel>
      </Middle>

      <StatusBar>
        <Listener>
          <ListenerPink />
          <ListenerWhite>欢迎使用<ListenerMono>MAXSc</ListenerMono></ListenerWhite>
        </Listener>
        <StatusMid>
          <StatusRow>
            <StatusText $w={281}>未选定任何对象</StatusText>
            <StatusCell $w={28}><Small w={12} h={16} vb="0 0 12 16"><path d="M6 1a4.5 4.5 0 0 1 3 8l-1 3H4L3 9a4.5 4.5 0 0 1 3-8z" fill="#c8c8c8" /><rect x="4.5" y="12" width="3" height="3" fill="#999" /></Small></StatusCell>
            <StatusCell $w={25}><Small w={14} h={14} vb="0 0 14 14"><rect x="3" y="6" width="8" height="7" fill="#ccc" /><path d="M4.5 6V4a2.5 2.5 0 0 1 5 0v2" stroke="#ccc" strokeWidth="1.4" /></Small></StatusCell>
            <StatusCell $w={28}><Small w={14} h={14} vb="0 0 14 14"><rect width="14" height="14" fill="#e6e6e6" /><circle cx="7" cy="7" r="3" stroke="#333" /><path d="M7 0v14M0 7h14" stroke="#333" /></Small></StatusCell>
            <AxisLabel $w={12}>X:</AxisLabel>
            <CoordInput $w={58} />
            <AxisLabel $w={24}>Y:</AxisLabel>
            <CoordInput $w={58}>134.861</CoordInput>
            <AxisLabel $w={25}>Z:</AxisLabel>
            <CoordInput $w={57}>0.0</CoordInput>
            <StatusCell $w={15} />
            <StatusText $w={99}>栅格 = 10.0</StatusText>
          </StatusRow>
          <StatusRow>
            <StatusText $w={585}>单击并拖动以选择并移动对象</StatusText>
            <StatusCell $w={26}>
              <ActiveInset $w={22} data-small="1"><Small w={16} h={16} vb="0 0 16 16"><path d="M2 5l3-3h9v9l-3 3H2z" fill="#eee" stroke="#333" /><path d="M5 5h6v6H5z" fill="#bbb" /></Small></ActiveInset>
            </StatusCell>
            <StatusText $w={99}>添加时间标记</StatusText>
          </StatusRow>
        </StatusMid>
        <KeyIconCell>
          <Small w={26} h={12} vb="0 0 26 12"><circle cx="5" cy="6" r="3.5" stroke="#eee" strokeWidth="1.8" /><path d="M9 6h15M19 6v4M23 6v3" stroke="#eee" strokeWidth="2" /></Small>
        </KeyIconCell>
        <KeyColumn>
          <KeyButton>自动关键点</KeyButton>
          <KeyButton>设置关键点</KeyButton>
        </KeyColumn>
        <KeyOptions>
          <SelectSet>选定对象</SelectSet>
          <FilterRow>
            <Small w={20} h={20} vb="0 0 20 20"><path d="M2 17L7 5l5 11 5-12" stroke="#c05a63" strokeWidth="1.4" /><path d="M6 15l6-10" stroke="#ccd" strokeWidth=".8" /></Small>
            关键点过滤器...
          </FilterRow>
        </KeyOptions>
        <PlayBlock>
          <Small w={18} h={12} vb="0 0 18 12"><path d="M1 1v10M17 1v10M8 2L3 6l5 4zM10 2l5 4-5 4z" stroke="#d8d8d8" /></Small>
        </PlayBlock>
        <FrameInput>0</FrameInput>
        <FrameSpin><TinyCaret $c="#ddd" $up /><TinyCaret $c="#ddd" /></FrameSpin>
        <NavGrid>
          <NavCell />
          <NavCell />
          <NavCell><Small><path d="M3 3h5v5H3zM10 3h5v5h-5zM3 10h5v5H3zM10 10h5v5h-5z" fill="#d8d8d8" /></Small></NavCell>
          <NavCell><Small><path d="M2 5V2h3M13 2h3v3M2 13v3h3M13 16h3v-3" stroke="#eee" /><path d="M6 7l3-2 3 2v5l-3 2-3-2z" fill="#6aa05a" /></Small></NavCell>
          <NavCell><Small><path d="M8 2h5v5H8zM13 4h4v4h-4z" fill="#ddd" /><path d="M2 10l4-3 4 3v6H2z" fill="#6aa05a" /></Small></NavCell>
          <NavCell><Small><rect x="1" y="2" width="9" height="11" fill="#e4e4e4" stroke="#234" /><circle cx="12" cy="13" r="4" fill="#ddd" stroke="#333" /></Small></NavCell>
          <NavCell><Small><rect x="3" y="2" width="10" height="10" stroke="#eee" strokeDasharray="2 1.5" /><circle cx="14" cy="13" r="2.5" fill="#eee" /></Small></NavCell>
          <NavCell><Hand size={17} fill="#eee" color="#222" /></NavCell>
          <NavCell><Small><path d="M9 2l6 11H3z" stroke="#eee" /><circle cx="9" cy="10" r="3.5" fill="#6aa05a" stroke="#eee" /></Small></NavCell>
          <NavCell><Small><rect x="2" y="3" width="13" height="12" fill="#e6e6e6" /><path d="M5 6l7 6M5 6h3M5 6v3" stroke="#222" /></Small></NavCell>
        </NavGrid>
      </StatusBar>

      <Watermark>
        <Small w={48} h={50} vb="0 0 48 50">
          <path d="M11 8C5 12 2 18 2 30c0 10 6 16 12 16 3 0 6-2 11-5l15-10c6-4 6-9 0-13L25 7c-4-3-8-3-10 1v30" stroke="#c8c9cf" strokeWidth="3.6" strokeLinecap="round" />
          <path d="M20 19l10 6-10 6z" fill="#c8c9cf" />
          <path d="M33 19v12" stroke="#c8c9cf" strokeWidth="2" />
        </Small>
        <MarkText>
          <MarkTitle>溜溜自学</MarkTitle>
          <MarkUrl>ZIXUE.3D66.COM</MarkUrl>
        </MarkText>
      </Watermark>
    </Page>
  );
}
